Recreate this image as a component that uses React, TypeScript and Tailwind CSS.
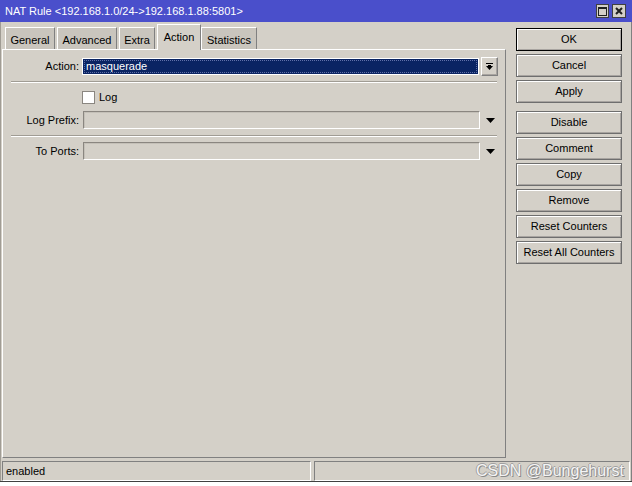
import React from "react";

const font = { fontFamily: '"Liberation Sans", Arial, sans-serif' };

function Tab({ label, active, w }: { label: string; active?: boolean; w: number }) {
  if (active) {
    return (
      <div
        className="relative z-10 -mb-px flex h-[26px] items-start justify-center border-l border-t border-r border-l-white border-t-white border-r-[#808080] bg-[#d4d0c8] pt-[5px] text-[11px] leading-[14px] text-black"
        style={{ width: w }}
      >
        {label}
      </div>
    );
  }
  return (
    <div
      className="flex h-[22px] items-start justify-center border-l border-t border-r border-l-white border-t-white border-r-[#808080] bg-[#c9c5bd] pt-[5px] text-[11px] leading-[14px] text-black"
      style={{ width: w }}
    >
      {label}
    </div>
  );
}

function Btn({ label, def }: { label: string; def?: boolean }) {
  return (
    <div
      className={
        "flex h-[23px] w-[106px] items-center justify-center border text-[11px] text-black shadow-[inset_1px_1px_0_#ffffff,inset_-1px_-1px_0_#a8a4a0] " +
        (def ? "border-black" : "border-[#6e6e6e]")
      }
    >
      {label}
    </div>
  );
}

function Arrow() {
  return (
    <svg width="9" height="5" viewBox="0 0 9 5" className="ml-[6px]">
      <polygon points="0,0 9,0 4.5,5" fill="#000" />
    </svg>
  );
}

function Sep() {
  return <div className="mx-[8px] h-[2px] border-t border-b border-t-[#a09c94] border-b-white" />;
}

function Field({ label, top }: { label: string; top: number }) {
  return (
    <div className="flex h-[18px] items-center" style={{ marginTop: top }}>
      <div className="w-[77px] pr-[1px] text-right text-[11px] leading-[14px] text-black">{label}</div>
      <div className="ml-[3px] h-[18px] w-[397px] border border-t-[#8a8680] border-l-[#8a8680] border-b-white border-r-white bg-[#d4d0c8] shadow-[inset_1px_1px_0_#c4c0b8]" />
      <Arrow />
    </div>
  );
}

export default function App() {
  return (
    <div className="relative flex h-[486px] w-[632px] flex-col overflow-hidden bg-[#d4d0c8]" style={font}>
      {/* Title bar */}
      <div className="flex h-[22px] items-center justify-between bg-[#4a4fcb] pl-[5px] pr-[6px]">
        <div className="text-[11px] text-white">NAT Rule &lt;192.168.1.0/24-&gt;192.168.1.88:5801&gt;</div>
        <div className="flex gap-[3px]">
          <div className="flex h-[14px] w-[13px] items-center justify-center border border-[#404040] bg-[#d4d0c8]">
            <div className="h-[9px] w-[9px] border border-t-2 border-[#202020]" />
          </div>
          <div className="flex h-[14px] w-[14px] items-center justify-center border border-[#404040] bg-[#d4d0c8]">
            <svg width="8" height="8" viewBox="0 0 8 8">
              <path d="M1 1 L7 7 M7 1 L1 7" stroke="#202020" strokeWidth="2" />
            </svg>
          </div>
        </div>
      </div>

      {/* Body */}
      <div className="flex h-[436px] border-l border-r border-l-[#a09c94] border-r-[#808080]">
        <div className="flex w-[506px] flex-col pl-[1px]">
          <div className="flex h-[27px] items-end pl-[3px]">
            <Tab label="General" w={50} />
            <div className="w-[2px]" />
            <Tab label="Advanced" w={60} />
            <div className="w-[2px]" />
            <Tab label="Extra" w={36} />
            <div className="w-[2px]" />
            <Tab label="Action" active w={44} />
            <Tab label="Statistics" w={56} />
          </div>
          <div className="flex h-[409px] w-[504px] flex-col border border-l-white border-t-white border-r-[#808080] border-b-[#808080]">
            {/* Action row */}
            <div className="mt-[7px] flex h-[18px] items-center">
              <div className="w-[77px] pr-[1px] text-right text-[11px] leading-[14px] text-black">Action:</div>
              <div className="ml-[2px] h-[17px] w-[397px] border border-white bg-[#0a2463] p-[1px]">
                <div className="flex h-full items-center border border-dotted border-[#6070a8] pl-[1px] text-[11px] leading-[13px] text-white">
                  masquerade
                </div>
              </div>
              <div className="ml-[2px] flex h-[19px] w-[17px] items-center justify-center border border-white border-r-[#808080] border-b-[#808080] shadow-[inset_-1px_-1px_0_#a8a4a0]">
                <svg width="7" height="7" viewBox="0 0 7 7">
                  <rect x="0" y="0" width="7" height="1" fill="#000" />
                  <rect x="2" y="2" width="3" height="1" fill="#000" />
                  <polygon points="0,3 7,3 3.5,7" fill="#000" />
                </svg>
              </div>
            </div>
            <div className="mt-[6px]">
              <Sep />
            </div>
            {/* Log checkbox */}
            <div className="mt-[8px] flex h-[13px] items-center">
              <div className="ml-[79px] h-[13px] w-[13px] border border-[#8a8680] bg-white" />
              <div className="ml-[4px] text-[11px] leading-[13px] text-black">Log</div>
            </div>
            <Field label="Log Prefix:" top={7} />
            <div className="mt-[6px]">
              <Sep />
            </div>
            <Field label="To Ports:" top={5} />
          </div>
        </div>

        {/* Buttons */}
        <div className="ml-[9px] flex flex-col pt-[6px]">
          <Btn label="OK" def />
          <div className="h-[3px]" />
          <Btn label="Cancel" />
          <div className="h-[3px]" />
          <Btn label="Apply" />
          <div className="h-[8px]" />
          <div className="flex flex-col gap-[3px]">
            <Btn label="Disable" />
            <Btn label="Comment" />
            <Btn label="Copy" />
            <Btn label="Remove" />
            <Btn label="Reset Counters" />
            <Btn label="Reset All Counters" />
          </div>
        </div>
      </div>

      {/* Status bar */}
      <div className="flex h-[23px] gap-[3px] border-l border-r border-l-[#a09c94] border-r-[#808080] px-[1px] pt-[3px]">
        <div className="flex h-[20px] w-[309px] items-center border border-t-[#808080] border-l-[#808080] border-b-white border-r-white pl-[3px] text-[11px] text-black">
          enabled
        </div>
        <div className="h-[20px] flex-1 border border-t-[#808080] border-l-[#808080] border-b-white border-r-white" />
      </div>
      <div className="h-[1px] bg-[#404040]" />
      <div className="flex-1 bg-white" />

      {/* Watermark */}
      <div
        className="absolute left-[476px] top-[459px] text-[16px] text-[#f4f4f4]"
        style={{ textShadow: "1px 1px 0 #8a8a8a, -1px 0 0 #a0a0a0, 0 -1px 0 #a0a0a0" }}
      >
        CSDN @Bungehurst
      </div>
    </div>
  );
}
